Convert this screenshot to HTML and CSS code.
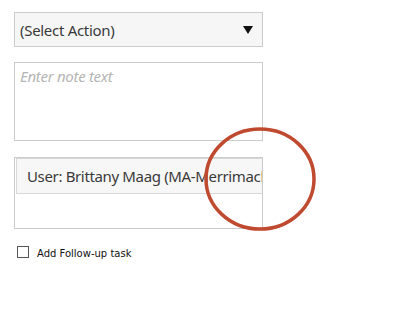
FILE: index.html
```html
<!DOCTYPE html>
<html lang="en">
<head>
    <meta charset="UTF-8">
    <title>Note</title>
    <link rel="stylesheet" href="styles.css">
</head>
<body>
    <div class="form">
        <!-- Action dropdown -->
        <div class="select">
            <span class="select-text">(Select Action)</span>
            <span class="select-arrow"></span>
        </div>

        <!-- Note text -->
        <div class="note">
            <span class="placeholder">Enter note text</span>
        </div>

        <!-- Recipients -->
        <div class="users">
            <div class="user-row">User: Brittany Maag (MA-Merrimack Valley)</div>
        </div>

        <!-- Follow-up -->
        <label class="follow">
            <span class="check"></span>
            <span class="follow-label">Add Follow-up task</span>
        </label>
    </div>

    <!-- Highlight marker -->
    <svg class="marker" width="130" height="120" viewBox="0 0 130 120">
        <ellipse cx="63" cy="57" rx="54" ry="50" fill="none" stroke="#c04a30" stroke-width="3.5"></ellipse>
    </svg>
</body>
</html>
```

FILE: styles.css
```css
* {
    margin: 0;
    padding: 0;
    box-sizing: border-box;
}
body {
    font-family: 'Noto Sans', sans-serif;
    background: #ffffff;
    color: #3a3a3a;
    width: 416px;
    height: 310px;
    position: relative;
    overflow: hidden;
}
.form {
    width: 249px;
    margin: 12px 0 0 14px;
    display: flex;
    flex-direction: column;
}
/* Dropdown */
.select {
    height: 35px;
    border: 1px solid #cccccc;
    background: #f6f6f6;
    display: flex;
    align-items: center;
    justify-content: space-between;
    padding: 0 9px 0 5px;
}
.select-text {
    font-size: 15px;
    letter-spacing: -0.3px;
}
.select-arrow {
    width: 0;
    height: 0;
    border-left: 5px solid transparent;
    border-right: 5px solid transparent;
    border-top: 8px solid #111111;
    margin-top: 1px;
}
/* Note textarea */
.note {
    margin-top: 15px;
    height: 79px;
    border: 1px solid #cccccc;
    padding: 2px 5px;
}
.placeholder {
    font-size: 15px;
    font-style: italic;
    color: #b5b5b5;
    letter-spacing: -0.3px;
}
/* Users box */
.users {
    margin-top: 16px;
    height: 72px;
    border: 1px solid #cccccc;
    padding: 0 0 0 1px;
    overflow: hidden;
}
.user-row {
    height: 36px;
    border: 1px solid #d8d8d8;
    border-right: none;
    background: #f7f7f7;
    padding-left: 10px;
    font-size: 15px;
    line-height: 34px;
    white-space: nowrap;
    overflow: hidden;
    letter-spacing: -0.35px;
}
/* Follow-up checkbox */
.follow {
    margin: 16px 0 0 3px;
    display: flex;
    align-items: center;
    gap: 8px;
}
.check {
    width: 12px;
    height: 12px;
    border: 1px solid #555555;
    background: #ffffff;
}
.follow-label {
    font-family: 'DejaVu Sans', sans-serif;
    font-size: 10px;
    color: #111111;
    margin-top: 3px;
}
/* Red circle drawn over the form */
.marker {
    position: absolute;
    left: 197px;
    top: 122px;
}
```
